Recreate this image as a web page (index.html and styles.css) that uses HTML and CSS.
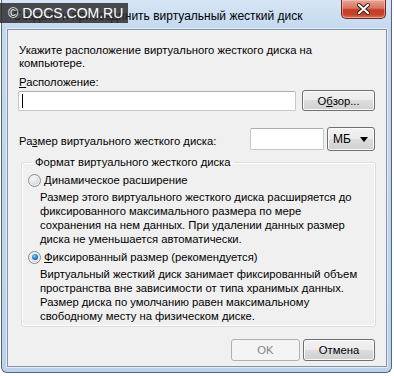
FILE: index.html
```html
<!DOCTYPE html>
<html lang="ru">
<head>
    <meta charset="UTF-8">
    <title>Создать и присоединить виртуальный жесткий диск</title>
    <link rel="stylesheet" href="styles.css">
</head>
<body>
    <div class="window">
        <div class="titlebar">
            <span class="title">Создать и присоединить виртуальный жесткий диск</span>
            <div class="close">
                <svg width="13" height="12" viewBox="0 0 13 12">
                    <path d="M2 2 L11 10 M11 2 L2 10" stroke="#3b1b14" stroke-width="4" stroke-linecap="square"/>
                    <path d="M2 2 L11 10 M11 2 L2 10" stroke="#ffffff" stroke-width="2" stroke-linecap="square"/>
                </svg>
            </div>
        </div>

        <div class="content">
            <p class="intro">Укажите расположение виртуального жесткого диска на<br>компьютере.</p>
            <div class="label"><u>Р</u>асположение:</div>
            <div class="path-row">
                <div class="field path"><span class="caret"></span></div>
                <div class="btn browse">О<u>б</u>зор...</div>
            </div>

            <div class="size-row">
                <span class="size-label">Ра<u>з</u>мер виртуального жесткого диска:</span>
                <div class="field size"></div>
                <div class="btn combo"><span>МБ</span><span class="arrow"></span></div>
            </div>

            <fieldset class="format">
                <legend>Формат виртуального жесткого диска</legend>
                <div class="option"><span class="radio"></span><span><u>Д</u>инамическое расширение</span></div>
                <p class="desc">Размер этого виртуального жесткого диска расширяется до<br>фиксированного максимального размера по мере<br>сохранения на нем данных. При удалении данных размер<br>диска не уменьшается автоматически.</p>
                <div class="option second"><span class="radio checked"></span><span><u>Ф</u>иксированный размер (рекомендуется)</span></div>
                <p class="desc">Виртуальный жесткий диск занимает фиксированный объем<br>пространства вне зависимости от типа хранимых данных.<br>Размер диска по умолчанию равен максимальному<br>свободному месту на физическом диске.</p>
            </fieldset>

            <div class="actions">
                <div class="btn action disabled">OK</div>
                <div class="btn action">Отмена</div>
            </div>
        </div>
    </div>

    <div class="watermark">© DOCS.COM.RU</div>
</body>
</html>
```

FILE: styles.css
```css
body {
    margin: 0;
    width: 394px;
    height: 376px;
    overflow: hidden;
    background: #ffffff;
    font-family: "Liberation Sans", Arial, sans-serif;
    font-size: 11.25px;
    color: #000000;
    position: relative;
}

.window {
    width: 391px;
    height: 373px;
    margin-left: 1px;
    box-sizing: border-box;
    border: 1px solid #56657a;
    border-top: none;
    border-radius: 0 0 6px 6px;
    background: linear-gradient(180deg, #d6e5f6 0%, #c4d8ef 30px, #bcd2ec 100%);
    padding: 0 4px 5px 5px;
    display: flex;
    flex-direction: column;
}

.titlebar {
    height: 29px;
    flex: none;
    display: flex;
    justify-content: space-between;
    align-items: flex-start;
}

.title {
    margin: 9px 0 0 6px;
    font-size: 12px;
    line-height: 14px;
    color: #000000;
}

.close {
    width: 45px;
    height: 19px;
    margin-right: 1px;
    box-sizing: border-box;
    border: 1px solid #6b2b20;
    border-top: none;
    border-radius: 0 0 5px 5px;
    background: linear-gradient(180deg, #e8a796 0%, #d9735e 45%, #c23d24 55%, #c4432a 80%, #d9765a 100%);
    box-shadow: inset 0 0 0 1px rgba(255, 220, 210, 0.45);
    display: flex;
    justify-content: center;
    align-items: center;
}

.content {
    height: 338px;
    box-sizing: border-box;
    background: #f0f0f0;
    border: 1px solid #8393ab;
    box-shadow: 0 0 0 1px rgba(255, 255, 255, 0.55);
    padding: 14px 10px 0 11px;
}

.intro {
    margin: 0;
    line-height: 13px;
}

.label {
    margin-top: 5px;
    line-height: 14px;
}

u {
    text-decoration: underline;
    text-underline-offset: 1px;
}

.path-row {
    display: flex;
    align-items: center;
    margin-top: 1px;
    height: 21px;
}

.field {
    box-sizing: border-box;
    background: #ffffff;
    border: 1px solid #c4c8cd;
    border-top-color: #abadb3;
    border-radius: 2px;
}

.path {
    width: 278px;
    height: 20px;
    margin-left: -1px;
    padding: 2px 0 0 3px;
}

.caret {
    display: block;
    width: 1px;
    height: 14px;
    background: #000000;
}

.btn {
    box-sizing: border-box;
    border: 1px solid #707070;
    border-radius: 3px;
    background: linear-gradient(180deg, #f2f2f2 0%, #ebebeb 50%, #dddddd 50%, #cfcfcf 100%);
    box-shadow: inset 0 0 0 1px #fbfbfb;
    display: flex;
    justify-content: center;
    align-items: center;
    line-height: 14px;
}

.browse {
    width: 73px;
    height: 21px;
    margin-left: auto;
    margin-right: 1px;
}

.size-row {
    display: flex;
    align-items: flex-start;
    margin-top: 16px;
    height: 24px;
}

.size-label {
    margin-top: 7px;
    line-height: 14px;
}

.size {
    width: 74px;
    height: 22px;
    margin: 1px 0 0 auto;
}

.combo {
    width: 48px;
    height: 24px;
    margin: 0 1px 0 3px;
    justify-content: space-between;
    padding: 0 6px 0 5px;
    font-size: 12px;
}

.arrow {
    width: 0;
    height: 0;
    border-left: 4px solid transparent;
    border-right: 4px solid transparent;
    border-top: 5px solid #000000;
}

.format {
    margin: 4px 0 0 2px;
    padding: 4px 0 3px 6px;
    border: 1px solid #d5dfe5;
    border-radius: 3px;
    box-shadow: inset 0 0 0 1px #ffffff;
}

.format legend {
    margin-left: 4px;
    padding: 0 3px;
    line-height: 14px;
}

.option {
    display: flex;
    align-items: center;
    gap: 3px;
    line-height: 14px;
}

.option.second {
    margin-top: 4px;
}

.radio {
    width: 13px;
    height: 13px;
    box-sizing: border-box;
    border-radius: 50%;
    border: 1px solid #8a8a8a;
    background: radial-gradient(circle at 40% 35%, #f8f8f8 0%, #e2e2e2 45%, #c9c9c9 100%);
    box-shadow: inset 0 0 0 1px #f4f4f4;
    display: flex;
    justify-content: center;
    align-items: center;
}

.radio.checked::after {
    content: "";
    width: 6px;
    height: 6px;
    border-radius: 50%;
    background: radial-gradient(circle at 40% 35%, #8fd3ff 0%, #2a86d1 45%, #104a8a 100%);
}

.desc {
    margin: 3px 0 0 12px;
    line-height: 14px;
}

.actions {
    display: flex;
    justify-content: flex-end;
    gap: 3px;
    margin-top: 12px;
    margin-right: 1px;
}

.action {
    width: 72px;
    height: 22px;
}

.action.disabled {
    width: 69px;
    border-color: #adb2b5;
    background: #f4f4f4;
    box-shadow: none;
    color: #838383;
}

.watermark {
    position: absolute;
    top: 3px;
    left: 0;
    width: 128px;
    height: 20px;
    box-sizing: border-box;
    padding-left: 8px;
    background: rgba(40, 40, 40, 0.82);
    color: #ffffff;
    font-size: 14px;
    line-height: 20px;
}
```
